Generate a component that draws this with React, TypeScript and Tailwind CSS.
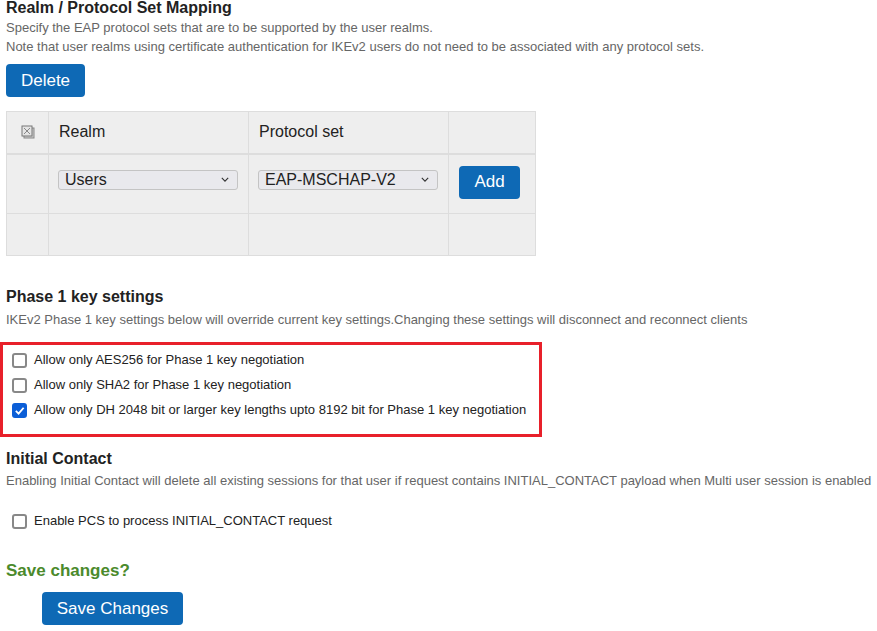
import { useState } from "react";

function Checkbox({ checked, onChange, label }: { checked: boolean; onChange: () => void; label: string }) {
  return (
    <label className="flex items-start gap-[7px] cursor-pointer">
      <span
        onClick={onChange}
        className={`mt-[3px] flex h-[15px] w-[15px] shrink-0 items-center justify-center rounded-[3px] border-2 ${
          checked ? "border-[#0b5ed7] bg-[#0b5ed7]" : "border-[#888] bg-white"
        }`}
      >
        {checked && (
          <svg viewBox="0 0 12 12" className="h-[11px] w-[11px]">
            <path d="M2 6.5 L5 9.5 L10.5 3" fill="none" stroke="white" strokeWidth="2" />
          </svg>
        )}
      </span>
      <span className="text-[13px] leading-[20px] text-[#222]">{label}</span>
    </label>
  );
}

function FakeSelect({ value }: { value: string }) {
  return (
    <div className="flex h-[20px] w-[180px] items-center justify-between rounded-[3px] border border-[#c4c4c4] bg-[#e9e9ed] pl-[6px] pr-[8px] text-[16px] text-[#222]">
      <span className="leading-none">{value}</span>
      <svg viewBox="0 0 10 6" className="h-[5px] w-[8px]">
        <path d="M1 1 L5 5 L9 1" fill="none" stroke="#333" strokeWidth="1.4" />
      </svg>
    </div>
  );
}

export default function App() {
  const [aes, setAes] = useState(false);
  const [sha, setSha] = useState(false);
  const [dh, setDh] = useState(true);
  const [initial, setInitial] = useState(false);

  return (
    <div className="w-[877px] h-[631px] overflow-hidden bg-white font-['Liberation_Sans',Arial,sans-serif]">
      <div className="px-[6px]">
        <h2 className="text-[16px] font-bold leading-[18px] text-[#222] -mt-[1px]">Realm / Protocol Set Mapping</h2>
        <p className="mt-[1px] text-[13px] leading-[19px] text-[#666]">
          Specify the EAP protocol sets that are to be supported by the user realms.
        </p>
        <p className="text-[13px] leading-[19px] text-[#666]">
          Note that user realms using certificate authentication for IKEv2 users do not need to be associated with any protocol sets.
        </p>

        <button className="mt-[8px] h-[33px] w-[79px] rounded-[4px] bg-[#0e69b5] text-[17px] text-white">
          Delete
        </button>

        <table className="mt-[14px] w-[530px] border-collapse bg-[#eeeeee] text-[16px] text-[#222]">
          <thead>
            <tr className="h-[42px] border-b-2 border-[#dddddd]">
              <th className="w-[42px] border border-[#dddddd] font-normal">
                <svg viewBox="0 0 14 14" className="mx-auto h-[14px] w-[14px]">
                  <rect x="3" y="3" width="10" height="10" fill="#ccc" stroke="#888" />
                  <rect x="1" y="1" width="10" height="10" fill="#e4e4e4" stroke="#777" />
                  <path d="M3 3 L9 9 M9 3 L3 9" stroke="#888" />
                </svg>
              </th>
              <th className="w-[200px] border border-[#dddddd] pl-[10px] text-left font-normal">Realm</th>
              <th className="w-[200px] border border-[#dddddd] pl-[10px] text-left font-normal">Protocol set</th>
              <th className="border border-[#dddddd]"></th>
            </tr>
          </thead>
          <tbody>
            <tr className="h-[60px]">
              <td className="border border-[#dddddd]"></td>
              <td className="border border-[#dddddd] pl-[9px] align-top pt-[15px]">
                <FakeSelect value="Users" />
              </td>
              <td className="border border-[#dddddd] pl-[9px] align-top pt-[15px]">
                <FakeSelect value="EAP-MSCHAP-V2" />
              </td>
              <td className="border border-[#dddddd] pl-[10px] align-top pt-[11px]">
                <button className="h-[33px] w-[61px] rounded-[4px] bg-[#0e69b5] text-[17px] text-white">Add</button>
              </td>
            </tr>
            <tr className="h-[42px]">
              <td className="border border-[#dddddd]"></td>
              <td className="border border-[#dddddd]"></td>
              <td className="border border-[#dddddd]"></td>
              <td className="border border-[#dddddd]"></td>
            </tr>
          </tbody>
        </table>

        <h2 className="mt-[32px] text-[16px] font-bold leading-[18px] text-[#222]">Phase 1 key settings</h2>
        <p className="mt-[4px] text-[13px] leading-[19px] text-[#666]">
          IKEv2 Phase 1 key settings below will override current key settings.Changing these settings will disconnect and reconnect clients
        </p>
      </div>

      <div className="mt-[13px] w-[542px] border-[3px] border-[#e8202a] pl-[9px] pt-[5px] pb-[14px]">
        <div className="flex flex-col gap-[5px]">
          <Checkbox checked={aes} onChange={() => setAes(!aes)} label="Allow only AES256 for Phase 1 key negotiation" />
          <Checkbox checked={sha} onChange={() => setSha(!sha)} label="Allow only SHA2 for Phase 1 key negotiation" />
          <Checkbox
            checked={dh}
            onChange={() => setDh(!dh)}
            label="Allow only DH 2048 bit or larger key lengths upto 8192 bit for Phase 1 key negotiation"
          />
        </div>
      </div>

      <div className="px-[6px]">
        <h2 className="mt-[13px] text-[16px] font-bold leading-[18px] text-[#222]">Initial Contact</h2>
        <p className="mt-[3px] text-[13px] leading-[19px] text-[#666] whitespace-nowrap">
          Enabling Initial Contact will delete all existing sessions for that user if request contains INITIAL_CONTACT payload when Multi user session is enabled
        </p>
        <div className="mt-[21px] pl-[6px]">
          <Checkbox checked={initial} onChange={() => setInitial(!initial)} label="Enable PCS to process INITIAL_CONTACT request" />
        </div>

        <h3 className="mt-[30px] text-[17px] font-bold leading-[20px] text-[#4b8a2c]">Save changes?</h3>
        <button className="ml-[36px] mt-[11px] h-[33px] w-[141px] rounded-[4px] bg-[#0e69b5] text-[17px] text-white">
          Save Changes
        </button>
      </div>
    </div>
  );
}
